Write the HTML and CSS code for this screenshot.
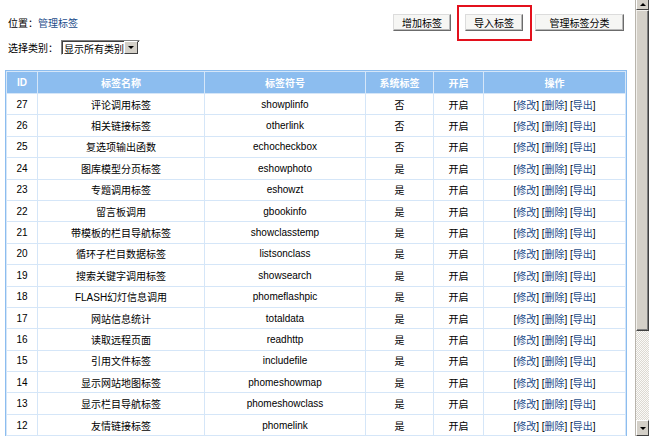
FILE: index.html
```html
<!DOCTYPE html>
<html lang="zh-CN">
<head>
	<meta charset="utf-8">
	<title>管理标签</title>
	<link rel="stylesheet" href="styles.css">
</head>
<body>
<div class="frame">
	<div class="main">
		<div class="topbar">
			<div class="pos">位置：<a href="#">管理标签</a></div>
			<div class="btns">
				<span class="btn">增加标签</span>
				<span class="btn marked">导入标签</span>
				<span class="btn">管理标签分类</span>
			</div>
		</div>
		<div class="filter">
			选择类别：
			<span class="select"><span class="sel-text">显示所有类别</span><span class="sel-arrow"></span></span>
		</div>

		<table class="list">
			<colgroup>
				<col class="c-id"><col class="c-name"><col class="c-var"><col class="c-sys"><col class="c-open"><col class="c-ops">
			</colgroup>
			<tr class="header">
				<td>ID</td><td>标签名称</td><td>标签符号</td><td>系统标签</td><td>开启</td><td>操作</td>
			</tr>
			<tr><td>27</td><td>评论调用标签</td><td>showplinfo</td><td>否</td><td>开启</td><td class="ops">[<a href="#">修改</a>] [<a href="#">删除</a>] [<a href="#">导出</a>]</td></tr>
			<tr><td>26</td><td>相关链接标签</td><td>otherlink</td><td>否</td><td>开启</td><td class="ops">[<a href="#">修改</a>] [<a href="#">删除</a>] [<a href="#">导出</a>]</td></tr>
			<tr><td>25</td><td>复选项输出函数</td><td>echocheckbox</td><td>否</td><td>开启</td><td class="ops">[<a href="#">修改</a>] [<a href="#">删除</a>] [<a href="#">导出</a>]</td></tr>
			<tr><td>24</td><td>图库模型分页标签</td><td>eshowphoto</td><td>是</td><td>开启</td><td class="ops">[<a href="#">修改</a>] [<a href="#">删除</a>] [<a href="#">导出</a>]</td></tr>
			<tr><td>23</td><td>专题调用标签</td><td>eshowzt</td><td>是</td><td>开启</td><td class="ops">[<a href="#">修改</a>] [<a href="#">删除</a>] [<a href="#">导出</a>]</td></tr>
			<tr><td>22</td><td>留言板调用</td><td>gbookinfo</td><td>是</td><td>开启</td><td class="ops">[<a href="#">修改</a>] [<a href="#">删除</a>] [<a href="#">导出</a>]</td></tr>
			<tr><td>21</td><td>带模板的栏目导航标签</td><td>showclasstemp</td><td>是</td><td>开启</td><td class="ops">[<a href="#">修改</a>] [<a href="#">删除</a>] [<a href="#">导出</a>]</td></tr>
			<tr><td>20</td><td>循环子栏目数据标签</td><td>listsonclass</td><td>是</td><td>开启</td><td class="ops">[<a href="#">修改</a>] [<a href="#">删除</a>] [<a href="#">导出</a>]</td></tr>
			<tr><td>19</td><td>搜索关键字调用标签</td><td>showsearch</td><td>是</td><td>开启</td><td class="ops">[<a href="#">修改</a>] [<a href="#">删除</a>] [<a href="#">导出</a>]</td></tr>
			<tr><td>18</td><td>FLASH幻灯信息调用</td><td>phomeflashpic</td><td>是</td><td>开启</td><td class="ops">[<a href="#">修改</a>] [<a href="#">删除</a>] [<a href="#">导出</a>]</td></tr>
			<tr><td>17</td><td>网站信息统计</td><td>totaldata</td><td>是</td><td>开启</td><td class="ops">[<a href="#">修改</a>] [<a href="#">删除</a>] [<a href="#">导出</a>]</td></tr>
			<tr><td>16</td><td>读取远程页面</td><td>readhttp</td><td>是</td><td>开启</td><td class="ops">[<a href="#">修改</a>] [<a href="#">删除</a>] [<a href="#">导出</a>]</td></tr>
			<tr><td>15</td><td>引用文件标签</td><td>includefile</td><td>是</td><td>开启</td><td class="ops">[<a href="#">修改</a>] [<a href="#">删除</a>] [<a href="#">导出</a>]</td></tr>
			<tr><td>14</td><td>显示网站地图标签</td><td>phomeshowmap</td><td>是</td><td>开启</td><td class="ops">[<a href="#">修改</a>] [<a href="#">删除</a>] [<a href="#">导出</a>]</td></tr>
			<tr><td>13</td><td>显示栏目导航标签</td><td>phomeshowclass</td><td>是</td><td>开启</td><td class="ops">[<a href="#">修改</a>] [<a href="#">删除</a>] [<a href="#">导出</a>]</td></tr>
			<tr><td>12</td><td>友情链接标签</td><td>phomelink</td><td>是</td><td>开启</td><td class="ops">[<a href="#">修改</a>] [<a href="#">删除</a>] [<a href="#">导出</a>]</td></tr>
		</table>
	</div>

	<!-- old style scrollbar of the frame -->
	<div class="sb">
		<div class="sb-btn up"></div>
		<div class="sb-thumb"></div>
		<div class="sb-track"></div>
		<div class="sb-btn down"></div>
	</div>
	<div class="gutter"></div>
</div>
</body>
</html>
```

FILE: styles.css
```css
html, body {
	margin: 0;
	padding: 0;
	background: #fff;
}

body {
	font-family: "Liberation Sans", "Noto Sans CJK SC", sans-serif;
	font-size: 10px;
	color: #000;
}

a {
	color: #1b4c8a;
	text-decoration: none;
}

.frame {
	display: flex;
	height: 436px;
	overflow: hidden;
}

.main {
	width: 635px;
	flex: none;
	padding: 14px 0 0 0;
	box-sizing: border-box;
	overflow: hidden;
}

.topbar {
	display: flex;
	justify-content: space-between;
	align-items: center;
	height: 17px;
	padding: 0 11px 0 8px;
}

.btns {
	display: flex;
}

.btn {
	display: flex;
	align-items: center;
	justify-content: center;
	height: 17px;
	width: 58px;
	box-sizing: border-box;
	margin-left: 14px;
	background: #f6f6f4;
	border: 1px solid;
	border-color: #dcdcdc #6b6b6b #6b6b6b #dcdcdc;
	box-shadow: inset -1px -1px 0 #b8b8b8;
	position: relative;
}

.btn:last-child {
	width: 89px;
	margin-left: 12px;
}

/* red annotation box */
.btn.marked:after {
	content: "";
	position: absolute;
	top: -10px;
	left: -9px;
	right: -10px;
	bottom: -11px;
	border: 2px solid #e3101c;
}

.filter {
	display: flex;
	align-items: center;
	height: 15px;
	margin-top: 9px;
	padding-left: 8px;
}

.select {
	display: flex;
	align-items: center;
	margin-left: 3px;
	width: 79px;
	height: 15px;
	box-sizing: border-box;
	border: 1px solid;
	border-color: #808080 #fff #fff #808080;
	box-shadow: inset 1px 1px 0 #404040;
	background: #fff;
}

.sel-text {
	flex: 1;
	padding-left: 2px;
	padding-top: 1px;
}

.sel-arrow {
	width: 12px;
	height: 11px;
	margin-right: 1px;
	background: #d4d0c8;
	border: 1px solid;
	border-color: #fff #404040 #404040 #fff;
	display: flex;
	align-items: center;
	justify-content: center;
}

.sel-arrow:before {
	content: "";
	border-left: 3px solid transparent;
	border-right: 3px solid transparent;
	border-top: 3px solid #000;
}

table.list {
	margin: 15px 0 0 5px;
	width: 622px;
	table-layout: fixed;
	border-collapse: separate;
	border-spacing: 1px;
	border: 1px solid #8cbdef;
	background: #d5e6f8;
}

.c-id { width: 30px; }
.c-name { width: 166px; }
.c-var { width: 160px; }
.c-sys { width: 67px; }
.c-open { width: 49px; }
.c-ops { width: 141px; }

table.list td {
	background: #fff;
	height: 20.4px;
	padding: 0;
	text-align: center;
	white-space: nowrap;
}

table.list tr.header td {
	background: #8cbdef;
	color: #fff;
	font-weight: bold;
	height: 21px;
}

/* scrollbar */
.sb {
	width: 14px;
	flex: none;
	display: flex;
	flex-direction: column;
	border-left: 1px solid #b8b4ac;
	box-sizing: border-box;
}

.sb-btn {
	flex: none;
	background: #d4d0c8;
	box-sizing: border-box;
	border: 1px solid;
	border-color: #fff #404040 #404040 #fff;
	display: flex;
	align-items: center;
	justify-content: center;
}

.sb-btn.up {
	height: 10px;
	border-top: none;
}

.sb-btn.up:before {
	content: "";
	border-left: 3px solid transparent;
	border-right: 3px solid transparent;
	border-bottom: 3px solid #000;
}

.sb-btn.down {
	height: 16px;
}

.sb-btn.down:before {
	content: "";
	border-left: 3px solid transparent;
	border-right: 3px solid transparent;
	border-top: 3px solid #000;
}

.sb-thumb {
	flex: none;
	height: 321px;
	background: #d4d0c8;
	box-sizing: border-box;
	border: 1px solid;
	border-color: #f2f0ec #404040 #404040 #f2f0ec;
	box-shadow: inset -1px -1px 0 #808080;
}

.sb-track {
	flex: 1;
	background: repeating-conic-gradient(#fbfaf8 0 25%, #dcd9d2 0 50%) 0 0 / 2px 2px;
}

.gutter {
	flex: 1;
	background: #fff;
}
```
